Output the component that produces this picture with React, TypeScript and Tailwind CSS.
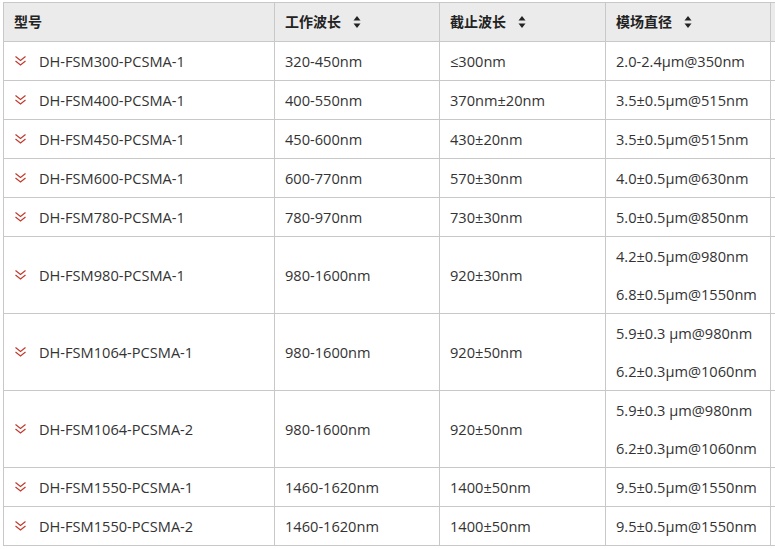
import React from "react";

type Row = {
  model: string;
  band: string;
  cutoff: string;
  mfd: string[];
};

const rows: Row[] = [
  { model: "DH-FSM300-PCSMA-1", band: "320-450nm", cutoff: "≤300nm", mfd: ["2.0-2.4μm@350nm"] },
  { model: "DH-FSM400-PCSMA-1", band: "400-550nm", cutoff: "370nm±20nm", mfd: ["3.5±0.5μm@515nm"] },
  { model: "DH-FSM450-PCSMA-1", band: "450-600nm", cutoff: "430±20nm", mfd: ["3.5±0.5μm@515nm"] },
  { model: "DH-FSM600-PCSMA-1", band: "600-770nm", cutoff: "570±30nm", mfd: ["4.0±0.5μm@630nm"] },
  { model: "DH-FSM780-PCSMA-1", band: "780-970nm", cutoff: "730±30nm", mfd: ["5.0±0.5μm@850nm"] },
  { model: "DH-FSM980-PCSMA-1", band: "980-1600nm", cutoff: "920±30nm", mfd: ["4.2±0.5μm@980nm", "6.8±0.5μm@1550nm"] },
  { model: "DH-FSM1064-PCSMA-1", band: "980-1600nm", cutoff: "920±50nm", mfd: ["5.9±0.3 μm@980nm", "6.2±0.3μm@1060nm"] },
  { model: "DH-FSM1064-PCSMA-2", band: "980-1600nm", cutoff: "920±50nm", mfd: ["5.9±0.3 μm@980nm", "6.2±0.3μm@1060nm"] },
  { model: "DH-FSM1550-PCSMA-1", band: "1460-1620nm", cutoff: "1400±50nm", mfd: ["9.5±0.5μm@1550nm"] },
  { model: "DH-FSM1550-PCSMA-2", band: "1460-1620nm", cutoff: "1400±50nm", mfd: ["9.5±0.5μm@1550nm"] },
];

function SortIcon() {
  return (
    <svg width="8" height="14" viewBox="0 0 8 14" className="ml-[12px] inline-block align-middle -mt-[2px]">
      <path d="M4 1 L7.5 5.5 L0.5 5.5 Z" fill="#222" />
      <path d="M4 13 L7.5 8.5 L0.5 8.5 Z" fill="#222" />
    </svg>
  );
}

function Chevrons() {
  return (
    <svg width="13" height="12" viewBox="0 0 13 12" className="mr-[12px] shrink-0">
      <polyline points="1.5,1.5 6.5,5.5 11.5,1.5" fill="none" stroke="#c0392b" strokeWidth="1.2" />
      <polyline points="1.5,6 6.5,10 11.5,6" fill="none" stroke="#c0392b" strokeWidth="1.2" />
    </svg>
  );
}

export default function App() {
  const cell = "border border-[#c8c8c8] px-[10px] align-middle leading-[38px]";
  return (
    <div
      className="w-[775px] h-[549px] overflow-hidden bg-white pt-[2px] pl-[3px] text-[14.6px] text-[#333]"
      style={{ fontFamily: '"Open Sans", "Noto Sans CJK SC", sans-serif' }}
    >
      <table className="table-fixed border-collapse w-[900px]">
        <colgroup>
          <col className="w-[271px]" />
          <col className="w-[165px]" />
          <col className="w-[166px]" />
          <col className="w-[165px]" />
          <col className="w-[133px]" />
        </colgroup>
        <thead>
          <tr className="bg-[#ebebeb] text-[14px] text-[#222]">
            <th className={`${cell} text-left font-bold`}>型号</th>
            <th className={`${cell} text-left font-bold`}>
              工作波长
              <SortIcon />
            </th>
            <th className={`${cell} text-left font-bold`}>
              截止波长
              <SortIcon />
            </th>
            <th className={`${cell} text-left font-bold`}>
              模场直径
              <SortIcon />
            </th>
            <th className={`${cell}`}></th>
          </tr>
        </thead>
        <tbody>
          {rows.map((r) => (
            <tr key={r.model}>
              <td className={cell}>
                <div className="flex items-center">
                  <Chevrons />
                  <span>{r.model}</span>
                </div>
              </td>
              <td className={cell}>{r.band}</td>
              <td className={cell}>{r.cutoff}</td>
              <td className={cell}>
                {r.mfd.map((m) => (
                  <div key={m}>{m}</div>
                ))}
              </td>
              <td className={cell}></td>
            </tr>
          ))}
        </tbody>
      </table>
    </div>
  );
}
